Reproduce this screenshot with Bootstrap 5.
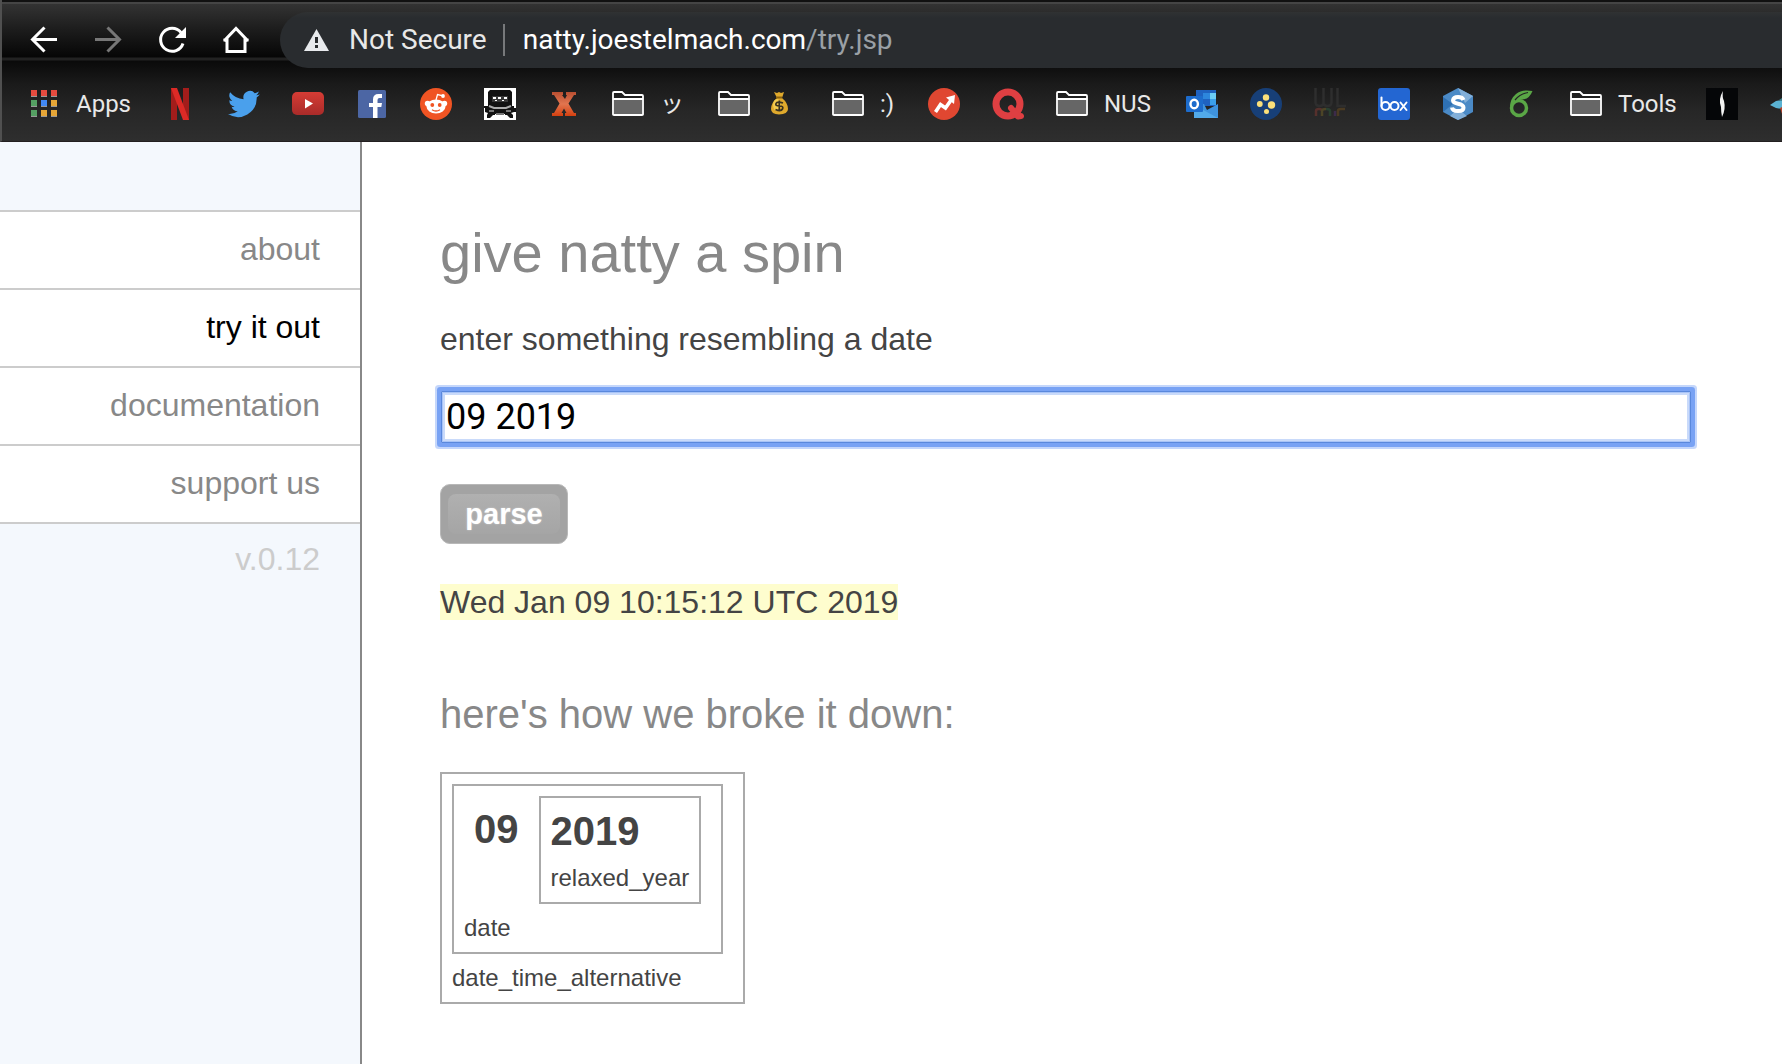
<!DOCTYPE html>
<html lang="en">
<head>
<meta charset="utf-8">
<meta name="viewport" content="width=device-width, initial-scale=1">
<title>natty - try it out</title>
<link href="https://cdn.jsdelivr.net/npm/bootstrap@5.3.0/dist/css/bootstrap.min.css" rel="stylesheet">
<style>
  body { font-family: "Liberation Sans", Arial, sans-serif; font-size: 32px; line-height: 36px; color: #444; background: #fff; }
  svg { display: block; flex: none; }

  /* browser chrome */
  .chrome { font-family: Roboto, "Noto Sans CJK JP", sans-serif; color: #e8e8e8; overflow: hidden;
    border-left: 2px solid #505050; border-bottom: 1px solid #231f20;
    background: linear-gradient(#111 0 2px, #454545 2px 4px, #333 4px, #1c1c1c 30px, #060606 57px, #222 58px 60px, #0a0a0a 61px, #1a1a1a 84px, #272727 112px, #2e2e2e 141px); }
  .toolbar { padding-top: 12px; padding-left: 26px; }
  .tool { width: 64px; color: #fff; background: none; border: 0; padding: 0; text-align: left; }
  .tool:disabled { color: #777; }
  .omnibox { height: 56px; margin-left: -4px; padding-left: 24px; background: linear-gradient(#303233, #292c2f 6px); border-radius: 28px 0 0 28px; font-size: 28px; line-height: 36px; }
  .divide { width: 2px; height: 32px; background: #77797b; margin: 0 18px 0 16px; }
  .host { color: #fff; }
  .path { color: #9aa0a6; }
  .bookmarks { padding: 20px 0 21px 26px; gap: 32px; font-size: 24px; line-height: 32px; }
  .bookmarks a { color: inherit; text-decoration: none; display: flex; gap: 16px; flex: none; height: 32px; white-space: nowrap; }
  .label-s { width: 16px; } .label-m { width: 26px; } .label-l { width: 34px; }
  .label-x { width: 50px; } .label-xl { width: 56px; }

  /* site */
  .side { width: 362px; flex: none; background: #f4f8fd; border-right: 2px solid #888; padding-top: 68px; }
  .side-menu { border-bottom: 2px solid #ccc; }
  .side-menu a { display: block; padding: 19px 40px 21px; border-top: 2px solid #ccc; background: #fff; color: #888; text-decoration: none; text-align: right; }
  .side-menu a.active { color: #000; }
  .version { padding: 17px 40px; color: #ccc; text-align: right; }
  .content { padding: 79px 90px 40px 78px; min-width: 0; }
  h1 { font-size: 56px; line-height: 64px; font-weight: 400; color: #888; margin: 0 0 36px; }
  h2 { font-size: 40px; line-height: 46px; font-weight: 400; color: #888; margin: 0 0 35px; }
  .date-box { display: block; width: calc(100% - 2px); height: 52px; margin: 34px 1px 41px; padding: 0 4px; border: 1px solid #5a88dc; border-radius: 1px; outline: 0; color: #000;
    font: 36px Roboto, sans-serif; box-shadow: inset 0 0 0 1px #a9c4f7, inset 0 0 0 3px #c9dafa, 0 0 0 4px #78a2f4, 0 0 0 6px #c5d7fb; }
  .parse { width: 128px; height: 60px; padding: 0; margin-bottom: 40px; border: 1px solid #b8b8b8; border-radius: 10px; color: #fff; font-size: 29px; font-weight: 700; line-height: 36px;
    background: #a3a3a3; }
  .parse-face { display: block; margin: 9px 7px; padding: 2px 0; border-radius: 8px; background: linear-gradient(#b0b0b0, #a5a5a5); text-shadow: 0 0 2px #ffffff80; }
  .result { margin: 0 0 71px; }
  .result span { display: inline-block; background: #fefdce; }
  .node { width: max-content; border: 2px solid #aaa; padding: 10px; margin-right: 10px; font-size: 24px; line-height: 28px; }
  .leaf { font-size: 40px; line-height: 46px; font-weight: 700; }
  .bare { padding: 10px; margin-right: 10px; }
  .caption-text { margin-top: 10px; }
</style>
<script src="https://cdn.jsdelivr.net/npm/bootstrap@5.3.0/dist/js/bootstrap.bundle.min.js"></script>
</head>
<body class="min-vh-100 d-flex flex-column">

<svg width="0" height="0" class="position-absolute" aria-hidden="true">
  <symbol id="folder" viewBox="0 0 32 32">
    <path d="M2 11h28v15.500H2z" fill="#666"/>
    <path d="M1 26.500V5q0-1 1-1h8l3 3h17q1 0 1 1v18.500q0 .5-1 .5H2q-1 0-1-.5zM1 11h30" fill="none" stroke="#fff" stroke-width="1.800"/>
  </symbol>
</svg>

<header class="chrome">
  <div class="toolbar d-flex align-items-center">
    <button class="tool" aria-label="Back"><svg width="32" height="32" viewBox="0 0 32 32" fill="none" stroke="currentColor" stroke-width="3"><path d="M29 15.500H5M16.500 3.500l-12 12 12 12"/></svg></button>
    <button class="tool" aria-label="Forward" disabled><svg width="32" height="32" viewBox="0 0 32 32" fill="none" stroke="currentColor" stroke-width="3"><path d="M3 15.500h24M15.500 3.500l12 12-12 12"/></svg></button>
    <button class="tool" aria-label="Reload"><svg width="32" height="32" viewBox="0 0 32 32"><path d="M27 19.500A11.500 11.500 0 1 1 25 8.500" fill="none" stroke="currentColor" stroke-width="3"/><path d="M30 3v11H19z" fill="currentColor"/></svg></button>
    <button class="tool" aria-label="Home"><svg width="32" height="32" viewBox="0 0 32 32" fill="none" stroke="currentColor" stroke-width="3"><path d="M4 17L16 4.500 28 17M7 14v13.500h18V14M3.500 16H8M24 16h4.500"/></svg></button>
    <div class="omnibox d-flex align-items-center flex-grow-1">
      <svg width="25" height="22" viewBox="0 0 25 22"><path d="M12.500 0L25 22H0z" fill="#e8eaed"/><path d="M11 8h3v6h-3zM11 16h3v3h-3z" fill="#292c2f"/></svg>
      <span class="ms-3 ps-1">Not Secure</span>
      <span class="divide"></span>
      <span><span class="host">natty.joestelmach.com</span><span class="path">/try.jsp</span></span>
    </div>
  </div>
  <nav class="bookmarks d-flex" aria-label="Bookmarks">
    <a href="#"><svg width="32" height="32" viewBox="0 0 32 32"><path d="M3 2h6v7H3zM13 2h6v7h-6zM23 2h6v7h-6z" fill="#e54b3f"/><path d="M3 12h6v7H3zM3 22h6v7H3z" fill="#55a063"/><path d="M13 12h6v7h-6z" fill="#4289f5"/><path d="M23 12h6v7h-6zM13 22h6v7h-6zM23 22h6v7h-6z" fill="#e6a637"/><path d="M3 8.500h6M13 8.500h6M23 8.500h6M3 18.500h6M13 18.500h6M23 18.500h6M3 28.500h6M13 28.500h6M23 28.500h6" stroke="#999"/></svg><span class="label-xl">Apps</span></a>
    <a href="#" aria-label="Netflix"><svg width="32" height="32" viewBox="0 0 32 32"><path d="M7 0h6v32H7zM19 0h6v32h-6z" fill="#a31d1b"/><path d="M7 0h6l12 32h-6z" fill="#dc2a26"/></svg></a>
    <a href="#" aria-label="Twitter"><svg width="32" height="32" viewBox="0 0 24 24"><path d="M23.900 4.600a10 10 0 0 1-2.800.8 4.900 4.900 0 0 0 2.100-2.700c-.9.500-2 1-3.100 1.200a4.900 4.900 0 0 0-8.400 4.500A14 14 0 0 1 1.600 3.200 4.900 4.900 0 0 0 3.200 9.700a4.900 4.900 0 0 1-2.200-.6 4.900 4.900 0 0 0 3.900 4.900 5 5 0 0 1-2.200.1 4.900 4.900 0 0 0 4.600 3.400A9.900 9.900 0 0 1 0 19.500 14 14 0 0 0 21.500 7.100a10 10 0 0 0 2.400-2.500z" fill="#4aa0ec"/></svg></a>
    <a href="#" aria-label="YouTube"><svg width="32" height="32" viewBox="0 0 32 32"><defs><linearGradient id="yt" x2="0" y2="1"><stop stop-color="#d63c35"/><stop offset="1" stop-color="#a92b29"/></linearGradient></defs><rect y="4" width="32" height="23" rx="5" fill="url(#yt)"/><path d="M13 11l8 4.500-8 5z" fill="#fff"/></svg></a>
    <a href="#" aria-label="Facebook"><svg width="32" height="32" viewBox="0 0 32 32"><rect x="2" y="2" width="28" height="28" rx="1.500" fill="#4c66a4"/><path d="M17 30V19h-4v-4h4v-3.500Q17 6 22.500 6H26v4h-2.500Q21.500 10 21.500 12v3H26l-.7 4h-3.800v11z" fill="#fff"/></svg></a>
    <a href="#" aria-label="Reddit"><svg width="32" height="32" viewBox="0 0 32 32"><circle cx="16" cy="16" r="16" fill="#f05423"/><path d="M16 12l1.500-5.500 4.500 1.200" fill="none" stroke="#fff" stroke-width="1.300"/><g fill="#fff"><circle cx="23" cy="8" r="1.900"/><circle cx="7.500" cy="15.500" r="2.700"/><circle cx="24.500" cy="15.500" r="2.700"/><ellipse cx="16" cy="18.500" rx="9.500" ry="7"/></g><g fill="#f05423"><circle cx="12.300" cy="17" r="1.900"/><circle cx="19.700" cy="17" r="1.900"/></g><path d="M12 21.700q4 2.600 8 0" fill="none" stroke="#f05423" stroke-width="1.300"/></svg></a>
    <a href="#" aria-label="Forum"><svg width="32" height="32" viewBox="0 0 32 32"><path d="M0 0h32v32H0z" fill="#fff"/><path d="M6 2h20l2 2v14h2v2h2v4h-2l-3 1 2 2v3h-3l-3-3H9l-3 3H3v-3l1-2-3-1v-4H0v-2h4V4z" fill="#111"/><path d="M8 8h16v6H8z" fill="#383838"/><path d="M9 9h3v2H9zM14 9h3v2h-3zM20 9h3v2h-3zM11 12h2v1h-2zM18 12h2v1h-2z" fill="#fff"/><path d="M5 18l5 2h12l5-2" fill="none" stroke="#aaa" stroke-width="2"/><path d="M11 26h10v6H11z" fill="#fff"/><path d="M12 26h8M5 23h5M22 23h5" stroke="#777" stroke-width="2"/></svg></a>
    <a href="#" aria-label="X"><svg width="32" height="32" viewBox="0 0 32 32"><defs><linearGradient id="xg" x2="0" y2="1"><stop stop-color="#b94f31"/><stop offset=".5" stop-color="#e2754f"/><stop offset="1" stop-color="#d4400f"/></linearGradient></defs><path d="M4 4h11v3h-1l3 4L19 7h-1V4h10v3h-2l-5.500 8.500L26 25h2v3H17v-3h1.500L16 20.500 13.500 25H15v3H4v-3h2l5.500-9.500L6 7H4z" fill="url(#xg)"/></svg></a>
    <a href="#"><svg width="32" height="32"><use href="#folder"/></svg><span class="label-m">ッ</span></a>
    <a href="#" aria-label="Money"><svg width="32" height="32"><use href="#folder"/></svg><svg class="label-l" height="32" viewBox="0 0 34 32"><path d="M8 4l3 1 2-1 2 1 3-1-2 6q6 5 6 11 0 5-9 5.500Q5 26 5 21q0-6 6-11z" fill="#dfa92c"/><path d="M10 9.500h6" stroke="#8a6210" stroke-width="2"/><ellipse cx="11" cy="17" rx="4" ry="6" fill="#f3ca4e"/><path d="M17 15q-6-2-7 0.500t3.500 2.500 3 3-7 .500M13.300 12.500v11" fill="none" stroke="#3b3320" stroke-width="1.700"/></svg></a>
    <a href="#"><svg width="32" height="32"><use href="#folder"/></svg><span class="label-s">:)</span></a>
    <a href="#" aria-label="Trends"><svg width="32" height="32" viewBox="0 0 32 32"><circle cx="16" cy="16" r="16" fill="#e04731"/><path d="M7.500 24l5-7.500 5 3.500 6-8.500" fill="none" stroke="#fff" stroke-width="3.600"/><path d="M18 9.500L27 7l-1 9z" fill="#fff"/></svg></a>
    <a href="#" aria-label="Quora"><svg width="32" height="32" viewBox="0 0 32 32"><circle cx="16" cy="16" r="12" fill="none" stroke="#df3f42" stroke-width="7"/><path d="M19 20l7 8.500 3-.5" fill="none" stroke="#df3f42" stroke-width="6" stroke-linecap="round" stroke-linejoin="round"/></svg></a>
    <a href="#"><svg width="32" height="32"><use href="#folder"/></svg><span class="label-x">NUS</span></a>
    <a href="#" aria-label="Outlook"><svg width="32" height="32" viewBox="0 0 32 32"><path d="M10 2h20v16H10z" fill="#1f62c0"/><path d="M17 5h7v6h-7z" fill="#2d86dc"/><path d="M24 5h6v6h-6z" fill="#6bcdf7"/><path d="M24 11h6v6h-6z" fill="#3ba0ea"/><path d="M8 16h10l3 6 11-6v14H8z" fill="#3f93dd"/><path d="M8 30V17l24 13z" fill="#52aaea"/><rect y="8" width="17" height="16" rx="1" fill="#1d6ccc"/><ellipse cx="8.200" cy="16" rx="3.700" ry="4.300" fill="none" stroke="#fff" stroke-width="2.400"/></svg></a>
    <a href="#" aria-label="Dots"><svg width="32" height="32" viewBox="0 0 32 32"><circle cx="16" cy="16" r="16" fill="#173f77"/><g fill="#fbe07a"><circle cx="16" cy="9.500" r="3.200"/><circle cx="9.800" cy="16" r="2.900"/><circle cx="21.500" cy="17" r="3.700"/><circle cx="16.500" cy="23.500" r="2.500"/></g></svg></a>
    <a href="#" aria-label="WL"><svg width="32" height="32" viewBox="0 0 32 32" fill="none" stroke-width="2.500"><path d="M1.500 0v14q0 4 4 4t4-4V0M9.500 14q0 4 4 4t4-4V0M23.500 0v18H32" stroke="#2e2e2e"/><path d="M2 28v-5q0-2 3-2t3 2" stroke="#56302c"/><path d="M8 23v5M8 23q0-2 4-2" stroke="#4c4426"/><path d="M12 21q4 0 4 2v5" stroke="#294030"/><path d="M21 28v-5" stroke="#3c2b4a"/><path d="M24 28v-5q0-2 3-2h4" stroke="#4a3a22"/></svg></a>
    <a href="#" aria-label="Box"><svg width="32" height="32" viewBox="0 0 32 32"><rect width="32" height="32" rx="3" fill="#2366d2"/><g fill="none" stroke="#fff" stroke-width="2" stroke-linecap="round"><path d="M3.500 9.500V18"/><circle cx="7.500" cy="18" r="4"/><circle cx="16.500" cy="18" r="4"/><path d="M22.500 14.500l6 7.500M28.500 14.500l-6 7.500"/></g></svg></a>
    <a href="#" aria-label="S"><svg width="32" height="32" viewBox="0 0 32 32"><path d="M16 0l15 8v16l-15 8-15-8V8z" fill="#4b8ac6"/><path d="M16 0l15 8-8 7zM8 28l8-7 9 7-9 4z" fill="#82afd9"/><path d="M1 9l10 7-10 8z" fill="#2e70b3"/><path d="M21.500 12q-1-3-5.500-3t-5 3.200q0 2.500 5 3.500 5.500 1 5.500 4 0 3.300-5.500 3.300t-6-3.500" fill="none" stroke="#fff" stroke-width="4"/></svg></a>
    <a href="#" aria-label="Overleaf"><svg width="32" height="32" viewBox="0 0 32 32"><circle cx="13" cy="20" r="7.500" fill="none" stroke="#5aa646" stroke-width="3.500"/><path d="M4 19Q4 11 10 6q6-5 16.500-3Q23 12 15 11.500q-5 0-7 3z" fill="#5aa646"/><path d="M9 12q5-6 13-7.500" fill="none" stroke="#222" stroke-width="1.200"/></svg></a>
    <a href="#"><svg width="32" height="32"><use href="#folder"/></svg><span class="label-xl">Tools</span></a>
    <a href="#" aria-label="Flame"><svg width="32" height="32" viewBox="0 0 32 32"><path d="M0 0h32v32H0z" fill="#050608"/><path d="M17 3q-1 6 1 10 2 8-2 16-1-5-1-10-3-8 2-16z" fill="#f2f2f2"/></svg></a>
    <a href="#" aria-label="Bird"><svg width="32" height="32" viewBox="0 0 32 32"><path d="M0 17l6-4 6-1v9l-6-1z" fill="#5ab2d2"/><path d="M9 12l3-2v3z" fill="#3c7c86"/><path d="M10 20l2-1v7z" fill="#b5442e"/></svg></a>
  </nav>
</header>

<div class="d-flex flex-grow-1">
  <aside class="side">
    <nav class="side-menu">
      <a href="#">about</a>
      <a href="#" class="active" aria-current="page">try it out</a>
      <a href="#">documentation</a>
      <a href="#">support us</a>
    </nav>
    <div class="version">v.0.12</div>
  </aside>
  <main class="content flex-grow-1">
    <h1>give natty a spin</h1>
    <form>
      <label class="d-block" for="date">enter something resembling a date</label>
      <input class="date-box" id="date" type="text" value="09 2019">
      <button class="parse d-block" type="button"><span class="parse-face">parse</span></button>
    </form>
    <p class="result"><span>Wed Jan 09 10:15:12 UTC 2019</span></p>
    <h2>here's how we broke it down:</h2>
    <div class="node">
      <div class="node">
        <div class="d-flex align-items-start">
          <div class="leaf bare">09</div>
          <div class="node">
            <div class="leaf">2019</div>
            <div class="caption-text">relaxed_year</div>
          </div>
        </div>
        <div class="caption-text">date</div>
      </div>
      <div class="caption-text">date_time_alternative</div>
    </div>
  </main>
</div>
</body>
</html>
